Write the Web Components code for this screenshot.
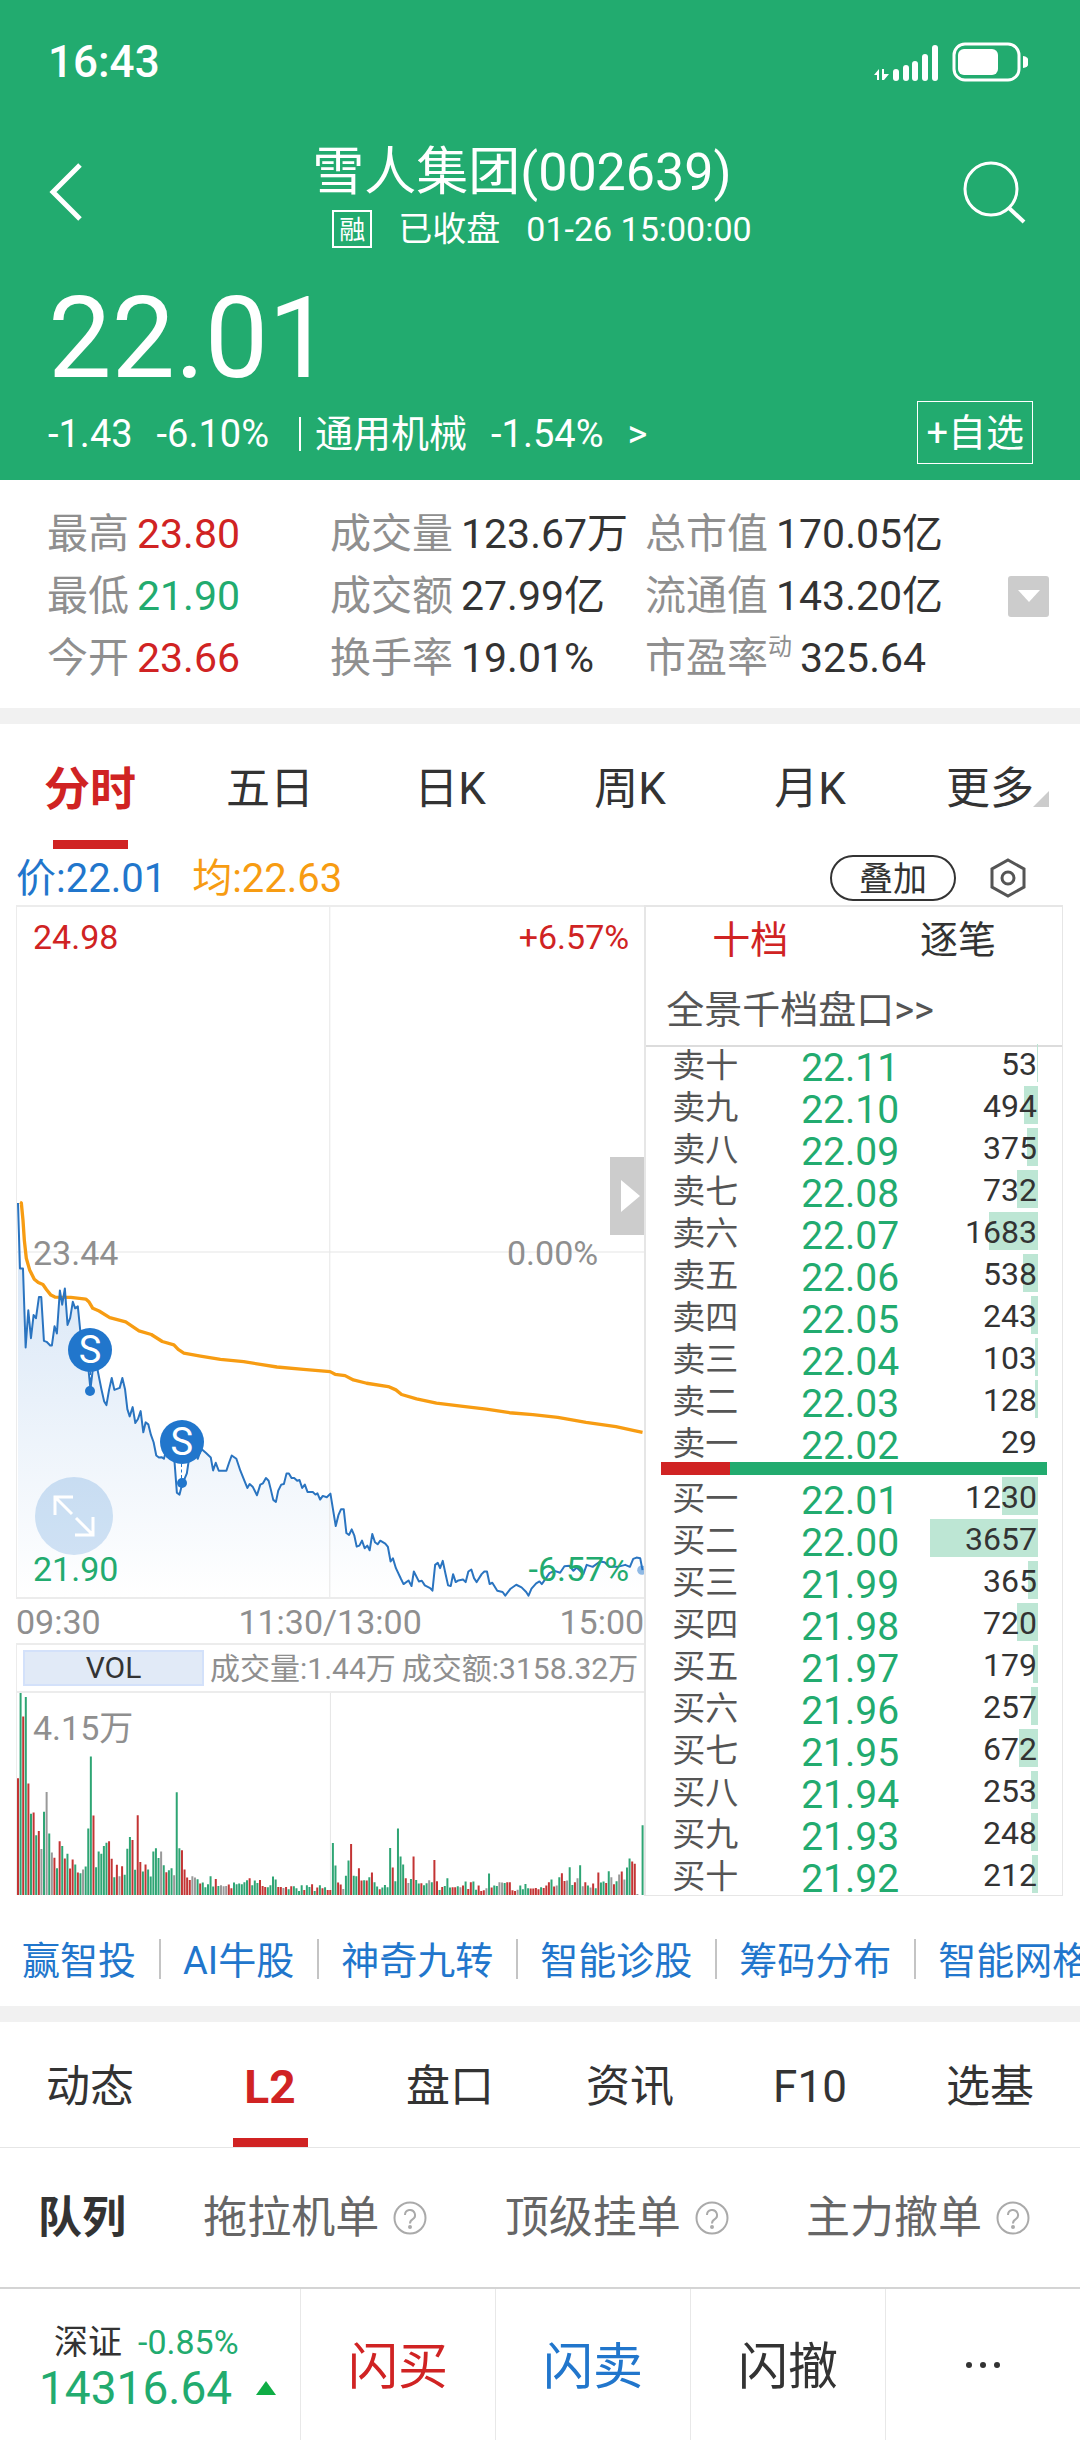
<!DOCTYPE html>
<html lang="zh-CN">
<head>
<meta charset="utf-8">
<meta name="viewport" content="width=device-width, initial-scale=1">
<title>雪人集团(002639)</title>
<style>
  :root {
    --up: #d02323;
    --down: #22ab6f;
    --blue: #2176cc;
    --avg: #f79c12;
    --ink: #333;
    --muted: #8f8f8f;
    --line: #ececec;
    --band: #f1f1f1;
  }
  body {
    margin: 0;
    background: #fff;
    color: var(--ink);
    font-family: Roboto, "Noto Sans CJK SC", sans-serif;
  }
</style>
</head>
<body>
<stock-page></stock-page>

<script>
// Shared reset for every shadow root
const base = `
  *, *::before, *::after { box-sizing: border-box; }
  button { margin: 0; padding: 0; border: 0; background: none; font: inherit; color: inherit; cursor: pointer; }
  a { color: inherit; text-decoration: none; }
  svg { display: block; }
`;

class BaseElement extends HTMLElement {
  constructor() {
    super();
    this.attachShadow({ mode: 'open' });
  }

  connectedCallback() {
    this.shadowRoot.innerHTML = `<style>${base}${this.styles()}</style>${this.markup()}`;
  }
}

/* ---------- header ---------- */

class StatusBar extends BaseElement {
  styles() {
    return `
      :host { box-sizing: border-box; display: flex; align-items: center; justify-content: space-between; height: 118px; padding: 5px 52px 0 48px; font-size: 44px; line-height: 60px; font-weight: 500; }
      .icons { display: flex; align-items: center; gap: 14px; }
    `;
  }

  markup() {
    return `
      <span>16:43</span>
      <span class="icons">
        <svg width="64" height="40" viewBox="0 0 64 40" fill="#fff">
          <path d="M0 33 L5 27 V38 H3 V33 Z M8 38 V27 H10 V32 H15 L10 38 Z"/>
          <rect x="19" y="27" width="6" height="12" rx="3"/>
          <rect x="29" y="23" width="6" height="16" rx="3"/>
          <rect x="38" y="19" width="6" height="20" rx="3"/>
          <rect x="48" y="12" width="6" height="27" rx="3"/>
          <rect x="58" y="3" width="6" height="36" rx="3"/>
        </svg>
        <svg width="76" height="40" viewBox="0 0 76 40" fill="#fff">
          <rect x="2" y="2" width="65" height="36" rx="11" fill="none" stroke="#fff" stroke-width="3"/>
          <rect x="6" y="7" width="40" height="26" rx="6"/>
          <path d="M71 14 a6 6 0 0 1 0 12 Z"/>
        </svg>
      </span>
    `;
  }
}
customElements.define('status-bar', StatusBar);

class StockHeader extends BaseElement {
  styles() {
    return `
      :host { display: block; padding-bottom: 16px; background: var(--down); color: #fff; font-size: 38px; line-height: 60px; }
      .title { display: flex; align-items: center; padding: 14px 52px 0 48px; }
      .names { flex: 1; padding-top: 11px; text-align: center; }
      h1 { margin: 0 0 4px; font-size: 52px; line-height: 60px; font-weight: 400; }
      .state { display: flex; justify-content: center; align-items: center; gap: 26px; padding-left: 40px; font-size: 34px; line-height: 44px; }
      .tag { width: 40px; height: 38px; border: 2px solid #fff; font-size: 26px; line-height: 36px; text-align: center; }
      .price { padding-left: 48px; margin-top: 30px; font-size: 113px; line-height: 116px; }
      .change { display: flex; align-items: center; justify-content: space-between; margin-top: 4px; padding: 0 47px 0 48px; }
      .move { display: flex; align-items: center; gap: 24px; padding-top: 2px; }
      .move i { width: 2px; height: 34px; margin: 0 -10px 0 6px; background: #fff; }
      .add { height: 63px; padding: 0 8px; border: 1px solid #fff; }
    `;
  }

  markup() {
    return `
      <status-bar></status-bar>
      <div class="title">
        <button aria-label="返回">
          <svg width="34" height="58" viewBox="0 0 34 58" fill="none" stroke="#fff" stroke-width="5"><path d="M32 2 L5 29 L32 56"/></svg>
        </button>
        <div class="names">
          <h1>雪人集团(002639)</h1>
          <div class="state"><span class="tag">融</span><span>已收盘</span><span>01-26 15:00:00</span></div>
        </div>
        <button aria-label="搜索">
          <svg width="66" height="64" viewBox="0 0 66 64" fill="none" stroke="#fff" stroke-width="3"><circle cx="29" cy="29" r="26"/><path d="M47 48 L62 62" stroke-width="4"/></svg>
        </button>
      </div>
      <div class="price">22.01</div>
      <div class="change">
        <div class="move"><span>-1.43</span><span>-6.10%</span><i></i><span>通用机械</span><span>-1.54%</span><a href="#sector">&gt;</a></div>
        <button class="add">+自选</button>
      </div>
    `;
  }
}
customElements.define('stock-header', StockHeader);

/* ---------- key figures ---------- */

class QuoteStats extends BaseElement {
  styles() {
    return `
      :host { display: flex; align-items: center; padding: 23px 31px 19px 47px; font-size: 41px; line-height: 62px; }
      dl { flex: 1; display: grid; grid-template-columns: 283px 315px 1fr; margin: 0; white-space: nowrap; }
      dl div { display: flex; gap: 8px; height: 62px; }
      dt { color: var(--muted); }
      dd { margin: 0; }
      sup { font-size: 24px; line-height: 40px; vertical-align: top; }
      .up { color: var(--up); }
      .down { color: var(--down); }
      .more { display: grid; place-items: center; width: 41px; height: 41px; border-radius: 3px; background: #ccc; }
    `;
  }

  markup() {
    const rows = [
      ['最高', '23.80', 'up'], ['成交量', '123.67万', ''], ['总市值', '170.05亿', ''],
      ['最低', '21.90', 'down'], ['成交额', '27.99亿', ''], ['流通值', '143.20亿', ''],
      ['今开', '23.66', 'up'], ['换手率', '19.01%', ''], ['市盈率<sup>动</sup>', '325.64', '']
    ];
    return `
      <dl>${rows.map(([k, v, c]) => `<div><dt>${k}</dt><dd class="${c}">${v}</dd></div>`).join('')}</dl>
      <button class="more" aria-label="展开">
        <svg width="22" height="12" viewBox="0 0 22 12" fill="#fff"><path d="M0 0 H22 L11 12 Z"/></svg>
      </button>
    `;
  }
}
customElements.define('quote-stats', QuoteStats);

/* ---------- tabs ---------- */

class TabStrip extends BaseElement {
  styles() {
    return `
      :host { display: grid; grid-auto-flow: column; grid-auto-columns: 1fr; height: 125px; font-size: 44px; line-height: 60px; }
      button { position: relative; display: flex; flex-direction: column; align-items: center; justify-content: space-between; padding-top: 35px; }
      button::after { content: ""; width: 75px; height: 9px; }
      .active { color: var(--up); font-size: 46px; font-weight: 700; }
      .active::after { background: var(--up); }
      .corner::before { content: ""; position: absolute; right: 31px; bottom: 42px; border: 8px solid transparent; border-right-color: #ccc; border-bottom-color: #ccc; }
    `;
  }

  markup() {
    const active = this.getAttribute('active');
    const corner = this.getAttribute('corner');
    return this.getAttribute('items').split(',').map(name => {
      const cls = name === active ? 'active' : name === corner ? 'corner' : '';
      return `<button role="tab" class="${cls}" aria-selected="${name === active}">${name}</button>`;
    }).join('');
  }
}
customElements.define('tab-strip', TabStrip);

/* ---------- chart ---------- */

class ChartLegend extends BaseElement {
  styles() {
    return `
      :host { box-sizing: border-box; display: flex; align-items: center; height: 56px; padding: 2px 54px 0 16px; font-size: 40px; line-height: 54px; }
      .price, .avg { padding-top: 2px; }
      .price { color: var(--blue); margin-right: 26px; }
      .avg { color: var(--avg); }
      .overlay { height: 46px; margin-left: auto; margin-right: 34px; padding: 0 27px; border: 2px solid var(--ink); border-radius: 23px; font-size: 34px; line-height: 44px; }
    `;
  }

  markup() {
    return `
      <span class="price">价:22.01</span><span class="avg">均:22.63</span>
      <button class="overlay">叠加</button>
      <button aria-label="设置">
        <svg width="36" height="40" viewBox="0 0 36 40" fill="none" stroke="#555" stroke-width="3"><path d="M18 2 L34 11 V29 L18 38 L2 29 V11 Z"/><circle cx="18" cy="20" r="6"/></svg>
      </button>
    `;
  }
}
customElements.define('chart-legend', ChartLegend);

// Plot space of both lines
const PLOT_W = 1887;
const PLOT_H = 2082;

const PRICE = `3,893 9,1091 18,1091 26,1329 34,1217 42,1301 50,1231 57,1241 66,1177 73,1177 81,1309 89,1312 100,1323 105,1323
  113,1265 120,1287 129,1157 136,1200 144,1151 152,1261 160,1240 168,1191 175,1211 183,1205 191,1285 202,1335 214,1385
  221,1455 228,1395 240,1385 254,1455 262,1491 269,1503 277,1457 285,1421 293,1457 309,1451 317,1421 325,1455 332,1515
  339,1537 348,1509 356,1557 364,1545 372,1521 380,1585 387,1555 395,1561 403,1593 411,1615 419,1655 427,1661 435,1660
  442,1665 450,1635 462,1625 474,1675 481,1767 489,1773 496,1745 506,1721 511,1709 519,1655 530,1625 544,1665 554,1635
  568,1647 583,1661 590,1700 598,1677 607,1701 630,1701 638,1677 646,1655 660,1665 672,1701 685,1733 693,1753 700,1741
  709,1749 722,1775 732,1743 740,1739 749,1723 757,1731 763,1755 771,1789 779,1795 786,1761 795,1743 803,1741 811,1709
  818,1709 826,1723 834,1723 843,1731 850,1729 858,1753 866,1743 874,1765 890,1765 898,1773 904,1769 912,1788 920,1777
  932,1781 943,1770 959,1868 967,1835 975,1817 983,1817 991,1889 999,1895 1007,1878 1015,1897 1022,1930 1030,1927
  1038,1912 1046,1935 1054,1927 1061,1941 1069,1892 1077,1917 1085,1923 1093,1912 1108,1921 1116,1931 1124,1975
  1131,1965 1140,1995 1155,2027 1163,2043 1178,2032 1187,2049 1194,2005 1209,2035 1218,2033 1227,2047 1243,2055
  1250,2063 1258,1985 1266,1979 1273,1995 1281,1973 1289,2011 1297,2047 1305,2049 1312,2013 1320,2037 1328,2032
  1342,2029 1350,2037 1358,2005 1367,1999 1375,2025 1383,2037 1398,2013 1406,2005 1414,2005 1422,2043 1430,2039
  1445,2063 1461,2067 1469,2078 1485,2057 1502,2045 1518,2053 1532,2067 1539,2078 1548,2057 1562,2041 1572,2035
  1579,2043 1602,2010 1617,2003 1634,2009 1647,1989 1662,1988 1674,2003 1684,1993 1704,2013 1714,1985 1732,1991
  1754,1975 1768,1977 1782,1991 1807,1991 1830,1985 1844,1991 1854,1967 1864,1963 1875,1965 1882,2001`;

const AVERAGE = `9,891 13,893 18,945 22,1005 28,1060 38,1095 52,1123 64,1133 78,1139 89,1155 102,1171 114,1177 162,1178 207,1183
  216,1191 228,1211 247,1219 279,1239 327,1252 367,1279 404,1290 437,1311 472,1321 485,1335 502,1346 552,1355 612,1365
  682,1372 782,1388 862,1395 942,1402 957,1410 987,1414 1012,1427 1052,1437 1117,1447 1140,1457 1157,1471 1202,1484
  1262,1497 1342,1507 1412,1515 1482,1526 1552,1532 1627,1540 1712,1555 1802,1568 1857,1580 1882,1585`;

// One entry per minute: r = up, g = down, k = flat
const VOLUME = `r348 g602 r532 g590 r332 g242 r246 g178 r191 k137 g248 k307 g183 k127 r111 g80 r160 g146 r109 g123 r79 r106 g91 r67
  g65 k76 g85 g198 g413 r237 g83 g130 g123 g146 g156 r160 r108 g53 r90 k56 r86 g60 g138 g173 r164 g75 r238 r98 g70 r91
  g76 g55 g130 g139 g110 k130 g89 r68 g74 g80 k59 g306 g139 r133 r76 r52 r45 k56 k52 g47 r34 g37 g23 g32 g56 g25 r48 g27
  k29 k26 k27 r31 r20 g37 g32 g34 g32 g38 g44 r50 g29 g43 g36 r45 r27 r24 g23 g29 g55 g46 r24 r24 k21 r24 g17 r26 g26
  g20 g12 g29 r15 g29 g24 r32 g12 r22 g29 r20 g23 r15 r15 g155 g88 r37 r31 k18 g57 g103 r152 g57 g56 r80 r43 g44 r43 g53
  r67 g38 g25 r17 g22 g30 g23 g140 r82 g41 g198 g115 g91 r50 k36 g48 r115 g45 g34 r35 g29 g35 k44 g38 r104 r41 g15 r24
  g27 g50 g22 r23 r23 g26 k23 r28 g40 r18 r38 g40 g16 r28 r12 r14 k20 g64 r22 g28 g27 k38 k37 g36 r38 r38 r14 r12 k16
  g28 g17 g33 g20 r19 r19 r21 r17 g23 r21 r28 r38 g46 r25 k28 g53 r65 r42 k43 g83 g30 r38 k50 g89 k26 r38 g28 k22 r34
  g20 r67 g37 g40 r36 g71 k53 r32 g41 k61 r70 k46 g82 g109 r100 r93 k3 k0 g208`;

class SellPin extends BaseElement {
  styles() {
    return `
      :host { position: absolute; display: flex; flex-direction: column; align-items: center; transform: translate(-50%, -22px); }
      b { width: 44px; height: 44px; border-radius: 50%; background: var(--blue); color: #fff; font-size: 38px; line-height: 44px; font-weight: 400; text-align: center; }
      i { height: 14px; border-left: 1px dashed var(--blue); }
      u { width: 10px; height: 10px; border-radius: 50%; background: var(--blue); }
    `;
  }

  markup() {
    return '<b><slot></slot></b><i></i><u></u>';
  }
}
customElements.define('sell-pin', SellPin);

class PriceChart extends BaseElement {
  styles() {
    return `
      :host { box-sizing: border-box; position: relative; display: block; height: 694px; border: 1px solid var(--line); border-width: 2px 0 2px 1px; font-size: 34px; line-height: 44px; }
      svg.plot { position: absolute; inset: 0; width: 100%; height: 100%; }
      .label { position: absolute; left: 16px; }
      .right { left: auto; right: 15px; }
      .top { top: 8px; }
      .mid { top: 324px; color: var(--muted); }
      .low { bottom: 6px; }
      .up { color: var(--up); }
      .down { color: var(--down); }
      .mid.right { right: 46px; }
      .side { position: absolute; right: 0; top: 250px; display: grid; place-items: center end; width: 34px; height: 78px; padding-right: 4px; background: #ccc; }
      .expand { position: absolute; left: 18px; bottom: 42px; display: grid; place-items: center; width: 78px; height: 78px; border-radius: 50%; background: rgba(33, 118, 204, .2); }
    `;
  }

  markup() {
    const pin = (x, y) => `<sell-pin style="left:${x / PLOT_W * 100}%;top:${y / PLOT_H * 100}%">S</sell-pin>`;
    return `
      <svg class="plot" viewBox="0 0 ${PLOT_W} ${PLOT_H}" preserveAspectRatio="none" fill="none">
        <defs>
          <linearGradient id="shade" x1="0" y1="893" x2="0" y2="${PLOT_H}" gradientUnits="userSpaceOnUse">
            <stop offset="0" stop-color="#d3e3f5"/><stop offset="1" stop-color="#fff"/>
          </linearGradient>
        </defs>
        <path d="M0 1041 H${PLOT_W}" stroke="#f2f2f2" stroke-width="6"/>
        <polygon points="3,${PLOT_H} ${PRICE} 1882,${PLOT_H}" fill="url(#shade)"/>
        <path d="M941 0 V${PLOT_H}" stroke="#e6e6e6" stroke-width="3"/>
        <polyline points="${AVERAGE}" stroke="#f79c12" stroke-width="10" stroke-linejoin="round"/>
        <polyline points="${PRICE}" stroke="#2a74c0" stroke-width="6" stroke-linejoin="round"/>
        <circle cx="1880" cy="2001" r="14" fill="#2176cc" opacity=".5"/>
      </svg>
      <span class="label top up">24.98</span><span class="label top right up">+6.57%</span>
      <span class="label mid">23.44</span><span class="label mid right">0.00%</span>
      <span class="label low down">21.90</span><span class="label low right down">-6.57%</span>
      ${pin(220, 1337)}${pin(496, 1613)}
      <button class="side" aria-label="收起盘口"><svg width="19" height="32" viewBox="0 0 19 32" fill="#fff"><path d="M0 0 L19 16 L0 32 Z"/></svg></button>
      <button class="expand" aria-label="全屏">
        <svg width="42" height="42" viewBox="0 0 42 42" fill="none" stroke="#fff" stroke-width="3"><path d="M2 20 V2 H20 M2 2 L19 19 M40 22 V40 H22 M40 40 L23 23"/></svg>
      </button>
    `;
  }
}
customElements.define('price-chart', PriceChart);

class VolumeChart extends BaseElement {
  styles() {
    return `
      :host { display: block; }
      .times { display: flex; justify-content: space-between; height: 44px; padding-top: 1px; font-size: 34px; line-height: 44px; color: var(--muted); }
      .info { display: flex; align-items: center; gap: 6px; height: 50px; padding: 0 6px; border: 2px solid var(--line); border-width: 2px 0 2px 1px; font-size: 30px; line-height: 36px; color: var(--muted); white-space: nowrap; }
      .info span { padding-top: 2px; }
      .info button { flex: 1; height: 36px; border: 2px solid #d3e1fa; background: #e1eaf7; color: var(--ink); line-height: 32px; }
      .bars { position: relative; height: 202px; border-left: 1px solid var(--line); }
      .bars svg { width: 100%; height: 100%; }
      .max { position: absolute; left: 16px; top: 13px; font-size: 34px; line-height: 44px; color: var(--muted); }
    `;
  }

  markup() {
    const colors = { r: '#c33434', g: '#2ea574', k: '#999' };
    const paths = { r: '', g: '', k: '' };
    VOLUME.trim().split(/\s+/).forEach((bar, i) => {
      const x = (i * PLOT_W / 241).toFixed(1);
      paths[bar[0]] += `M${x} 602v-${bar.slice(1)}h6v${bar.slice(1)}z`;
    });
    return `
      <div class="times"><span>09:30</span><span>11:30/13:00</span><span>15:00</span></div>
      <div class="info"><button>VOL</button><span>成交量:1.44万</span><span>成交额:3158.32万</span></div>
      <div class="bars">
        <svg viewBox="0 0 ${PLOT_W} 602" preserveAspectRatio="none">
          <path d="M943 0 V602" stroke="#e6e6e6" stroke-width="3"/>
          ${Object.keys(paths).map(k => `<path d="${paths[k]}" fill="${colors[k]}"/>`).join('')}
        </svg>
        <span class="max">4.15万</span>
      </div>
    `;
  }
}
customElements.define('volume-chart', VolumeChart);

/* ---------- order book ---------- */

const ASKS = [['卖十', '22.11', 53], ['卖九', '22.10', 494], ['卖八', '22.09', 375], ['卖七', '22.08', 732], ['卖六', '22.07', 1683],
  ['卖五', '22.06', 538], ['卖四', '22.05', 243], ['卖三', '22.04', 103], ['卖二', '22.03', 128], ['卖一', '22.02', 29]];
const BIDS = [['买一', '22.01', 1230], ['买二', '22.00', 3657], ['买三', '21.99', 365], ['买四', '21.98', 720], ['买五', '21.97', 179],
  ['买六', '21.96', 257], ['买七', '21.95', 672], ['买八', '21.94', 253], ['买九', '21.93', 248], ['买十', '21.92', 212]];

class OrderBook extends BaseElement {
  styles() {
    return `
      :host { display: flex; flex-direction: column; border: 2px solid #e6e6e6; border-right-width: 1px; border-bottom-width: 1px; font-size: 38px; line-height: 50px; }
      .tabs { display: grid; grid-template-columns: 1fr 1fr; height: 66px; }
      .tabs .active { color: var(--up); }
      .deep { height: 74px; padding: 12px 20px 0; border-bottom: 2px solid #dcdcdc; color: #555; }
      tbody { display: block; }
      table { display: flex; flex-direction: column; justify-content: flex-end; }
      .asks { height: 415px; }
      tr { display: grid; grid-template: 42px / 129px 1fr 108px; padding: 0 24px 0 26px; }
      th, td { padding: 6px 0 0; font-weight: 400; text-align: left; white-space: nowrap; line-height: 36px; }
      th { font-size: 33px; color: #555; }
      .price { padding-top: 10px; font-size: 39px; line-height: 32px; color: var(--down); }
      .count { display: flex; justify-content: flex-end; padding: 4px 1px 0 0; font-size: 32px; background: linear-gradient(#bde6d4, #bde6d4) no-repeat right 2px / var(--w) 38px; }
      .ratio { height: 13px; margin: 0 15px; background: linear-gradient(to right, var(--up) 18%, var(--down) 18%); }
    `;
  }

  row([name, price, count]) {
    const width = Math.round(count / 3657 * 108 - 0.4);
    return `<tr><th scope="row">${name}</th><td class="price">${price}</td><td class="count" style="--w:${width}px">${count}</td></tr>`;
  }

  markup() {
    return `
      <div class="tabs"><button class="active">十档</button><button>逐笔</button></div>
      <a class="deep" href="#depth">全景千档盘口&gt;&gt;</a>
      <table class="asks"><tbody>${ASKS.map(this.row).join('')}</tbody></table>
      <div class="ratio"></div>
      <table><tbody>${BIDS.map(this.row).join('')}</tbody></table>
    `;
  }
}
customElements.define('order-book', OrderBook);

/* ---------- lower part ---------- */

class ToolLinks extends BaseElement {
  styles() {
    return `
      :host { display: flex; padding: 43px 0 27px; overflow: hidden; font-size: 38px; line-height: 36px; color: var(--blue); }
      a { flex: none; padding: 4px 23px 0 22px; }
      a + a { border-left: 2px solid #c4c4c4; }
    `;
  }

  markup() {
    return ['赢智投', 'AI牛股', '神奇九转', '智能诊股', '筹码分布', '智能网格'].map(t => `<a href="#tool">${t}</a>`).join('');
  }
}
customElements.define('tool-links', ToolLinks);

class QueueTabs extends BaseElement {
  styles() {
    return `
      :host { box-sizing: border-box; display: flex; justify-content: space-between; align-items: center; height: 140px; padding: 0 50px 0 38px; border-top: 1px solid #e6e6e6; font-size: 44px; line-height: 60px; color: #666; }
      button { display: flex; align-items: center; gap: 14px; }
      .active { color: var(--ink); font-weight: 700; }
    `;
  }

  markup() {
    // question mark in a ring behind each hint
    const help = `<svg width="34" height="34" viewBox="0 0 34 34" fill="none" stroke="#aaa" stroke-width="2"><circle cx="17" cy="17" r="15.5"/><path d="M12 14 a5 5 0 1 1 7.5 4.3 q-2.5 1.4 -2.5 4.2"/><circle cx="17" cy="26" r="1" fill="#aaa"/></svg>`;
    return `<button class="active">队列</button>` +
      ['拖拉机单', '顶级挂单', '主力撤单'].map(t => `<button>${t}${help}</button>`).join('');
  }
}
customElements.define('queue-tabs', QueueTabs);

class TradeBar extends BaseElement {
  styles() {
    return `
      :host { box-sizing: border-box; display: grid; grid-template-columns: 300px repeat(4, 1fr); height: 153px; border-top: 2px solid #d4d4d4; font-size: 50px; line-height: 60px; }
      button { padding-top: 4px; }
      button + button { border-left: 1px solid #e8e8e8; }
      .index { display: grid; align-content: center; justify-items: start; padding: 2px 0 0 39px; color: var(--down); }
      .index span { display: flex; align-items: center; }
      .name { gap: 16px; padding-left: 15px; font-size: 34px; line-height: 44px; }
      .name b { font-weight: 400; color: var(--ink); }
      .value { gap: 24px; font-size: 46px; line-height: 48px; }
      .buy { color: var(--up); }
      .sell { color: var(--blue); }
      .more { display: grid; place-items: center; padding: 0; }
    `;
  }

  markup() {
    return `
      <button class="index">
        <span class="name"><b>深证</b>-0.85%</span>
        <span class="value">14316.64<svg width="20" height="14" viewBox="0 0 20 14" fill="#0fad45"><path d="M10 0 L20 14 H0 Z"/></svg></span>
      </button>
      <button class="buy">闪买</button>
      <button class="sell">闪卖</button>
      <button>闪撤</button>
      <button class="more" aria-label="更多"><svg width="40" height="8" viewBox="0 0 40 8" fill="#333"><circle cx="6" cy="4" r="3"/><circle cx="20" cy="4" r="3"/><circle cx="34" cy="4" r="3"/></svg></button>
    `;
  }
}
customElements.define('trade-bar', TradeBar);

/* ---------- page ---------- */

class StockPage extends BaseElement {
  styles() {
    return `
      :host { display: block; overflow: hidden; }
      .band { height: 16px; background: var(--band); }
      .quote { display: grid; grid-template-columns: 3fr 2fr; padding: 0 17px 0 16px; }
    `;
  }

  markup() {
    return `
      <stock-header></stock-header>
      <quote-stats></quote-stats>
      <div class="band"></div>
      <tab-strip items="分时,五日,日K,周K,月K,更多" active="分时" corner="更多"></tab-strip>
      <chart-legend></chart-legend>
      <div class="quote">
        <div><price-chart></price-chart><volume-chart></volume-chart></div>
        <order-book></order-book>
      </div>
      <tool-links></tool-links>
      <div class="band"></div>
      <tab-strip items="动态,L2,盘口,资讯,F10,选基" active="L2"></tab-strip>
      <queue-tabs></queue-tabs>
      <trade-bar></trade-bar>
    `;
  }
}
customElements.define('stock-page', StockPage);
</script>
</body>
</html>
